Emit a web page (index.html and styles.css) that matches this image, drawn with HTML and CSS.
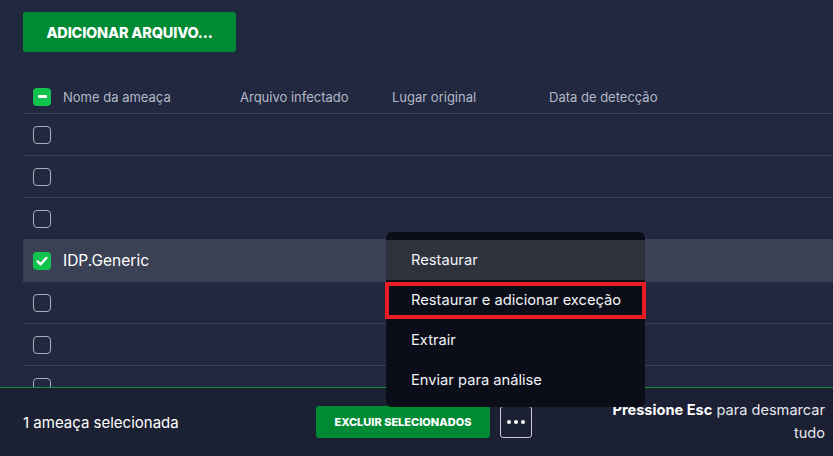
FILE: index.html
```html
<!DOCTYPE html>
<html lang="pt">
<head>
<meta charset="utf-8">
<link rel="stylesheet" href="styles.css">
</head>
<body>
<div class="app">
  <main class="main">
    <button class="btn-add">ADICIONAR ARQUIVO...</button>
    <div class="table">
      <div class="row head">
        <span class="cb partial"><span class="dash"></span></span>
        <span class="col">Nome da ameaça</span>
        <span class="col">Arquivo infectado</span>
        <span class="col">Lugar original</span>
        <span class="col">Data de detecção</span>
      </div>
      <div class="row"><span class="cb"></span></div>
      <div class="row"><span class="cb"></span></div>
      <div class="row"><span class="cb"></span></div>
      <div class="row selected">
        <span class="cb checked"><svg viewBox="0 0 18 18" width="18" height="18"><path d="M4.6 9.4 L7.6 12.3 L13.4 5.9" fill="none" stroke="#fff" stroke-width="2.4" stroke-linecap="round" stroke-linejoin="round"/></svg></span>
        <span class="name">IDP.Generic</span>
      </div>
      <div class="row"><span class="cb"></span></div>
      <div class="row"><span class="cb"></span></div>
      <div class="row"><span class="cb"></span></div>
    </div>
  </main>
  <footer class="bar">
    <span class="count">1 ameaça selecionada</span>
    <div class="actions">
      <button class="btn-del">EXCLUIR SELECIONADOS</button>
      <button class="btn-more"><span></span><span></span><span></span></button>
    </div>
    <p class="hint"><b>Pressione Esc</b> para desmarcar<br>tudo</p>
  </footer>
  <div class="menu">
    <div class="item active">Restaurar</div>
    <div class="item">Restaurar e adicionar exceção</div>
    <div class="item">Extrair</div>
    <div class="item">Enviar para análise</div>
    <div class="mark"></div>
  </div>
</div>
</body>
</html>
```

FILE: styles.css
```css
* { box-sizing: border-box; }
html, body { margin: 0; padding: 0; }
body {
  background: #21283f;
  font-family: Inter, "Noto Sans", "Liberation Sans", sans-serif;
  color: #fff;
}
.app {
  position: relative;
  width: 833px;
  height: 456px;
  display: flex;
  flex-direction: column;
  overflow: hidden;
}
.main {
  flex: 1;
  overflow: hidden;
  padding: 12px 0 0 23px;
}
.btn-add {
  display: block;
  width: 213px;
  height: 40px;
  border: 0;
  border-radius: 3px;
  background: #008a34;
  color: #fff;
  font-family: inherit;
  font-weight: 800;
  font-size: 14.5px;
  letter-spacing: -0.2px;
  padding: 0;
}
.table { margin-top: 28px; }
.row {
  display: grid;
  grid-template-columns: 40px 177px 152px 157px 1fr;
  align-items: center;
  height: 42px;
  border-bottom: 1px solid #3b4152;
}
.row.head { height: 34px; }
.row.selected { background: #3b4154; }
.col {
  font-size: 13px;
  color: #b4b9c6;
}
.cb {
  margin-left: 10px;
  width: 18px;
  height: 18px;
  border: 1.5px solid #a9aeb9;
  border-radius: 4px;
  display: flex;
  align-items: center;
  justify-content: center;
}
.cb.partial, .cb.checked {
  background: #12c24f;
  border: 0;
}
.cb .dash {
  width: 9px;
  height: 3px;
  border-radius: 1px;
  background: #fff;
}
.name {
  font-size: 15.5px;
  font-weight: 400;
  color: #fff;
}
.bar {
  height: 69px;
  flex: none;
  background: #1b2033;
  border-top: 1px solid #1e8c3a;
  display: flex;
  align-items: center;
  padding: 0 8px 0 23px;
}
.count {
  font-size: 15px;
  font-weight: 400;
  width: 293px;
}
.actions {
  display: flex;
  gap: 10px;
  align-items: center;
}
.btn-del {
  width: 174px;
  height: 32px;
  border: 0;
  border-radius: 3px;
  background: #008a34;
  color: #fff;
  font-family: inherit;
  font-size: 11px;
  font-weight: 800;
  padding: 0;
}
.btn-more {
  width: 32px;
  height: 32px;
  border: 1px solid #c9cdd5;
  border-radius: 3px;
  background: transparent;
  display: flex;
  align-items: center;
  justify-content: center;
  gap: 3px;
  padding: 0;
}
.btn-more span {
  width: 4px;
  height: 4px;
  border-radius: 50%;
  background: #fff;
}
.hint {
  margin: 0 0 0 auto;
  text-align: right;
  font-size: 14.6px;
  line-height: 23px;
  color: #e6e8ee;
}
.hint b { color: #fff; font-weight: 700; }
.menu {
  position: absolute;
  left: 386px;
  top: 232px;
  width: 259px;
  padding: 8px 0 7px;
  background: #0b0e18;
  border-radius: 6px;
}
.item {
  height: 40px;
  display: flex;
  align-items: center;
  padding-left: 25px;
  font-size: 14.7px;
  font-weight: 400;
  color: #f2f3f6;
}
.item.active { background: #2e323c; }
.mark {
  position: absolute;
  left: -1px;
  right: -1px;
  top: 50px;
  height: 37px;
  border: 4px solid #e81c25;
}
```
